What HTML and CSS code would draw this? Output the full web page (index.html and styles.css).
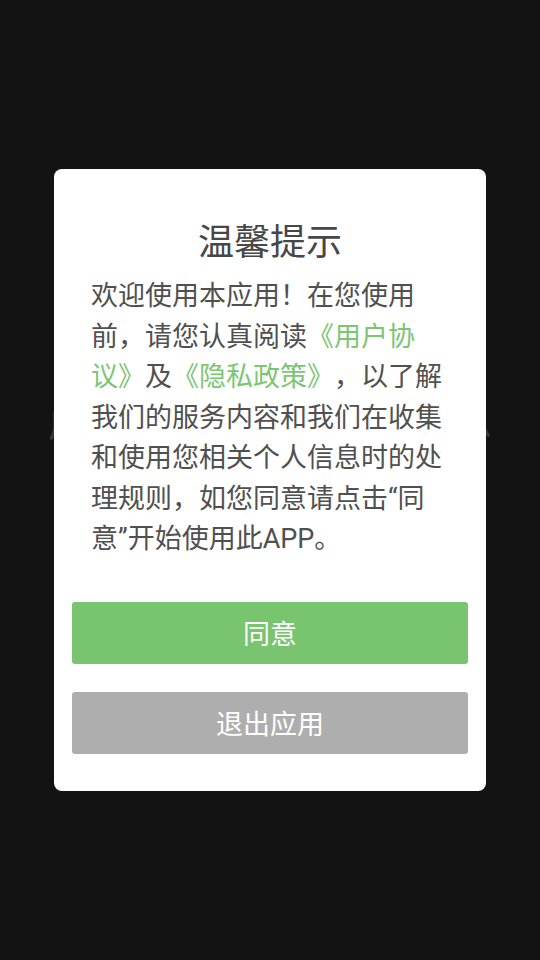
FILE: index.html
```html
<!DOCTYPE html>
<html lang="zh-CN">
<head>
<meta charset="utf-8">
<title>温馨提示</title>
<link rel="stylesheet" href="styles.css">
</head>
<body>
<div class="screen">
  <div class="splash-text">广告加载中请稍后获取信息</div>
  <div class="dialog">
    <div class="title">温馨提示</div>
    <p class="message">欢迎使用本应用！在您使用前，请您认真阅读<span class="link">《用户协议》</span>及<span class="link">《隐私政策》</span>，以了解我们的服务内容和我们在收集和使用您相关个人信息时的处理规则，如您同意请点击“同意”开始使用此APP。</p>
    <div class="actions">
      <div class="btn btn-agree">同意</div>
      <div class="btn btn-exit">退出应用</div>
    </div>
  </div>
</div>
</body>
</html>
```

FILE: styles.css
```css
html, body {
  margin: 0;
  padding: 0;
  background: #131313;
}
body {
  font-family: Roboto, "Noto Sans CJK SC", sans-serif;
  text-spacing-trim: space-all;
}
.screen {
  position: relative;
  width: 540px;
  height: 960px;
  overflow: hidden;
  background: #131313;
}
.splash-text {
  padding-top: 402px;
  text-align: center;
  font-size: 37px;
  line-height: 46px;
  color: #3a3a3a;
  white-space: nowrap;
}
.dialog {
  position: absolute;
  left: 54px;
  top: 169px;
  width: 432px;
  box-sizing: border-box;
  background: #ffffff;
  border-radius: 8px;
  padding: 47px 0 37px;
}
.title {
  text-align: center;
  font-size: 36px;
  line-height: 54px;
  color: #474747;
}
.message {
  margin: 6px 37px 0;
  font-size: 27px;
  line-height: 40.5px;
  color: #505050;
  text-spacing-trim: space-all;
}
.link {
  color: #7cc672;
}
.actions {
  margin: 42px 18px 0;
  display: flex;
  flex-direction: column;
  gap: 28px;
}
.btn {
  height: 62px;
  border-radius: 3px;
  display: flex;
  align-items: center;
  justify-content: center;
  font-size: 27px;
  color: #ffffff;
}
.btn-agree {
  background: #78c46f;
}
.btn-exit {
  background: #aeaeae;
}
```
